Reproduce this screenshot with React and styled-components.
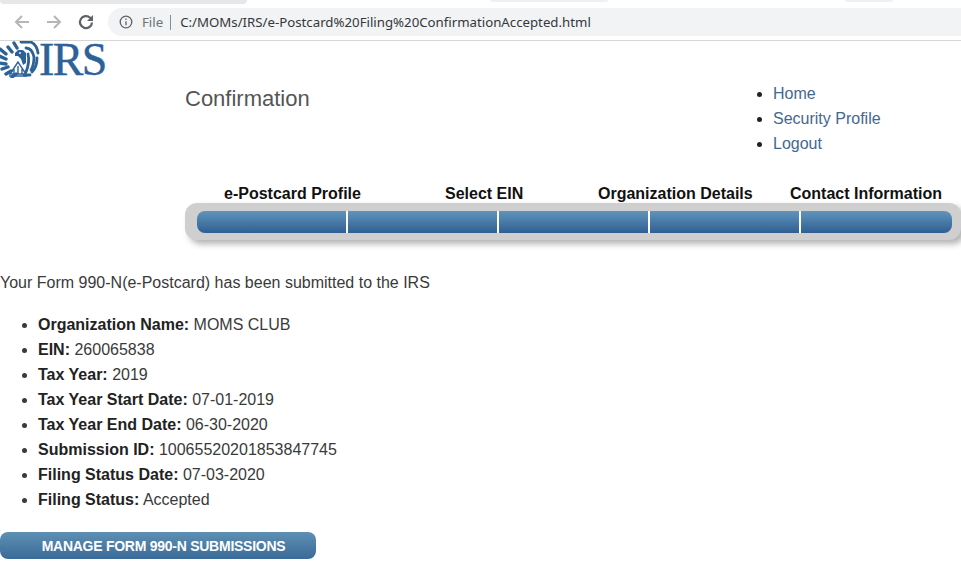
import React from 'react';
import styled, { createGlobalStyle } from 'styled-components';

const Global = createGlobalStyle`
  html, body { margin: 0; padding: 0; background: #fff; }
  body { width: 961px; height: 572px; overflow: hidden; font-family: "Liberation Sans", Arial, sans-serif; color: #333; }
`;

const Chrome = styled.header`
  position: relative;
  height: 40px;
  border-bottom: 1px solid #d6d6d6;
  display: flex;
  align-items: flex-end;
  background: #fff;
`;
const TabEdge = styled.div`
  position: absolute;
  top: 0;
  left: ${p => p.$left}px;
  width: ${p => p.$width}px;
  height: ${p => p.$height}px;
  background: ${p => p.$color};
  border-radius: 0 0 6px 6px;
`;
const Toolbar = styled.div`
  height: 32px;
  margin-bottom: 2px;
  flex: 1;
  display: flex;
  align-items: center;
  padding-left: 12px;
`;
const NavIcons = styled.div`
  display: flex;
  align-items: center;
  gap: 12px;
`;
const NavIcon = styled.svg`
  width: 20px;
  height: 20px;
  display: block;
  fill: none;
  stroke: ${p => p.$dark ? '#5f6368' : '#b4b6b8'};
  stroke-width: ${p => p.$dark ? 2.3 : 2};
`;
const Omnibox = styled.div`
  margin-left: 12px;
  width: 854px;
  height: 28px;
  background: #f1f3f4;
  border-radius: 14px 0 0 14px;
  display: flex;
  align-items: center;
  padding-left: 11px;
  font-family: "Noto Sans", "Open Sans", sans-serif;
  font-size: 13.24px;
`;
const Scheme = styled.span`
  margin-left: 9px;
  color: #6f7276;
  padding-right: 7px;
  border-right: 1px solid #8a8d90;
  line-height: 15px;
`;
const Url = styled.span`
  margin-left: 9px;
  color: #35383b;
  white-space: nowrap;
`;

const Masthead = styled.div`
  display: flex;
  height: 141px;
`;
const LogoWrap = styled.div`
  width: 185px;
  display: flex;
  align-items: flex-start;
`;
const LogoText = styled.span`
  font-family: "Liberation Serif", serif;
  font-size: 46px;
  line-height: 37px;
  color: #2d6299;
  letter-spacing: -1.6px;
  -webkit-text-stroke: 0.4px #2d6299;
  margin-left: -1px;
`;
const Title = styled.h1`
  margin: 45px 0 0;
  width: 548px;
  font-size: 22px;
  line-height: 25px;
  font-weight: 400;
  color: #555;
`;
const Links = styled.ul`
  margin: 40px 0 0;
  padding: 0 0 0 40px;
  list-style: disc;
  font-size: 16px;
  line-height: 25px;
  color: #222;
`;
const LinkItem = styled.li`
  a { color: #44688f; text-decoration: none; }
`;

const Steps = styled.section`
  margin-left: 185px;
`;
const StepLabels = styled.div`
  display: flex;
  height: 21px;
  align-items: flex-end;
  font-size: 16px;
  font-weight: 700;
  color: #111;
  line-height: 18px;
`;
const StepLabel = styled.span`
  width: ${p => p.$w}px;
  padding-left: ${p => p.$pad}px;
  white-space: nowrap;
  box-sizing: border-box;
`;
const Track = styled.div`
  height: 37px;
  box-sizing: border-box;
  padding: 8px 9px 7px 12px;
  background: #cfcfcf;
  border-radius: 12px;
  box-shadow: 4px 4px 6px rgba(0,0,0,.3);
`;
const Bar = styled.div`
  height: 22px;
  display: flex;
  border-radius: 8px;
  overflow: hidden;
  background: linear-gradient(#6094bb, #2f5f92);
`;
const Segment = styled.div`
  width: ${p => p.$w}px;
  flex: ${p => p.$w ? 'none' : 1};
  border-right: ${p => p.$last ? 0 : '2px solid #fff'};
  box-sizing: border-box;
`;

const Main = styled.main`
  font-size: 16px;
  line-height: 25px;
  color: #3a3a3a;
`;
const Lead = styled.p`
  margin: 30px 0 0;
`;
const Details = styled.ul`
  margin: 17px 0 0;
  padding: 0 0 0 38px;
`;
const Label = styled.strong`
  color: #222;
`;
const ActionButton = styled.button`
  display: block;
  margin-top: 20px;
  width: 316px;
  height: 27px;
  padding: 0 0 0 11px;
  border: 0;
  border-radius: 8px;
  background: linear-gradient(#5e90b4, #3a6a98);
  color: #fff;
  font-family: "Liberation Sans", Arial, sans-serif;
  font-size: 14px;
  font-weight: 700;
  letter-spacing: -0.26px;
`;

const Eagle = styled.svg`
  display: block;
  width: 40px;
  height: 37px;
  flex: none;
`;

const details = [
  ['Organization Name:', 'MOMS CLUB'],
  ['EIN:', '260065838'],
  ['Tax Year:', '2019'],
  ['Tax Year Start Date:', '07-01-2019'],
  ['Tax Year End Date:', '06-30-2020'],
  ['Submission ID:', '10065520201853847745'],
  ['Filing Status Date:', '07-03-2020'],
  ['Filing Status:', 'Accepted'],
];

export default function App() {
  return (
    <>
      <Global />
      <Chrome>
        <TabEdge $left={0} $width={247} $height={4} $color="#e6e7e8" />
        <TabEdge $left={490} $width={118} $height={2} $color="#f0f0f0" />
        <TabEdge $left={845} $width={48} $height={2} $color="#f0f0f0" />
        <Toolbar>
          <NavIcons>
            <NavIcon viewBox="0 0 20 20"><path d="M17 10H4M10 4l-6 6 6 6" /></NavIcon>
            <NavIcon viewBox="0 0 20 20"><path d="M3 10h13M10 4l6 6-6 6" /></NavIcon>
            <NavIcon $dark viewBox="0 0 20 20">
              <path d="M16 10.5A6 6 0 1 1 14.2 5.8L16 7.5" />
              <path d="M17 3v6h-6z" fill="#5f6368" stroke="none" />
            </NavIcon>
          </NavIcons>
          <Omnibox>
            <svg width="14" height="14" viewBox="0 0 14 14" fill="none" stroke="#5f6368" strokeWidth="1.3">
              <circle cx="7" cy="7" r="5.8" />
              <path d="M7 6.2v4M7 3.6v1.4" />
            </svg>
            <Scheme>File</Scheme>
            <Url>C:/MOMs/IRS/e-Postcard%20Filing%20ConfirmationAccepted.html</Url>
          </Omnibox>
        </Toolbar>
      </Chrome>
      <Masthead>
        <LogoWrap>
          <Eagle viewBox="0 0 40 37">
            <g fill="none" stroke="#2d6299" strokeLinecap="round">
              <g strokeWidth="3.4">
                <path d="M0 8l6 5M-1 15l7 3M-1 22l7 1M2 28l6-2M6 33l5-3M12 36l4-3" />
                <path d="M8 6l4 5M14 2l3 5" />
              </g>
              <g strokeWidth="2.8">
                <path d="M21 1h10q6 3 7 11" />
                <path d="M26 7q6 0 8 9q0 8-3 13" />
                <path d="M28 13q2 8-2 18" />
                <path d="M37 17q0 9-5 14" />
                <path d="M24 34h6" />
              </g>
              <g strokeWidth="1.4" strokeLinecap="butt">
                <path d="M18 21L10 33h16zM14 33v-5M18 33v-8M22 33v-5M9 35h18" />
              </g>
            </g>
            <path d="M15 12l3-3h5l3 3v10l-3 2-2-6-3-3-3 0z" fill="#2d6299" />
            <circle cx="20" cy="12" r="0.9" fill="#fff" />
          </Eagle>
          <LogoText>IRS</LogoText>
        </LogoWrap>
        <Title>Confirmation</Title>
        <Links>
          <LinkItem><a href="#home">Home</a></LinkItem>
          <LinkItem><a href="#profile">Security Profile</a></LinkItem>
          <LinkItem><a href="#logout">Logout</a></LinkItem>
        </Links>
      </Masthead>
      <Steps>
        <StepLabels>
          <StepLabel $w={222} $pad={39}>e-Postcard Profile</StepLabel>
          <StepLabel $w={152} $pad={38}>Select EIN</StepLabel>
          <StepLabel $w={192} $pad={39}>Organization Details</StepLabel>
          <StepLabel $pad={39}>Contact Information</StepLabel>
        </StepLabels>
        <Track>
          <Bar>
            <Segment $w={151} />
            <Segment $w={151} />
            <Segment $w={151} />
            <Segment $w={151} />
            <Segment $last />
          </Bar>
        </Track>
      </Steps>
      <Main>
        <Lead>Your Form 990-N(e-Postcard) has been submitted to the IRS</Lead>
        <Details>
          {details.map(([k, v]) => (
            <li key={k}><Label>{k}</Label> {v}</li>
          ))}
        </Details>
        <ActionButton>MANAGE FORM 990-N SUBMISSIONS</ActionButton>
      </Main>
    </>
  );
}
